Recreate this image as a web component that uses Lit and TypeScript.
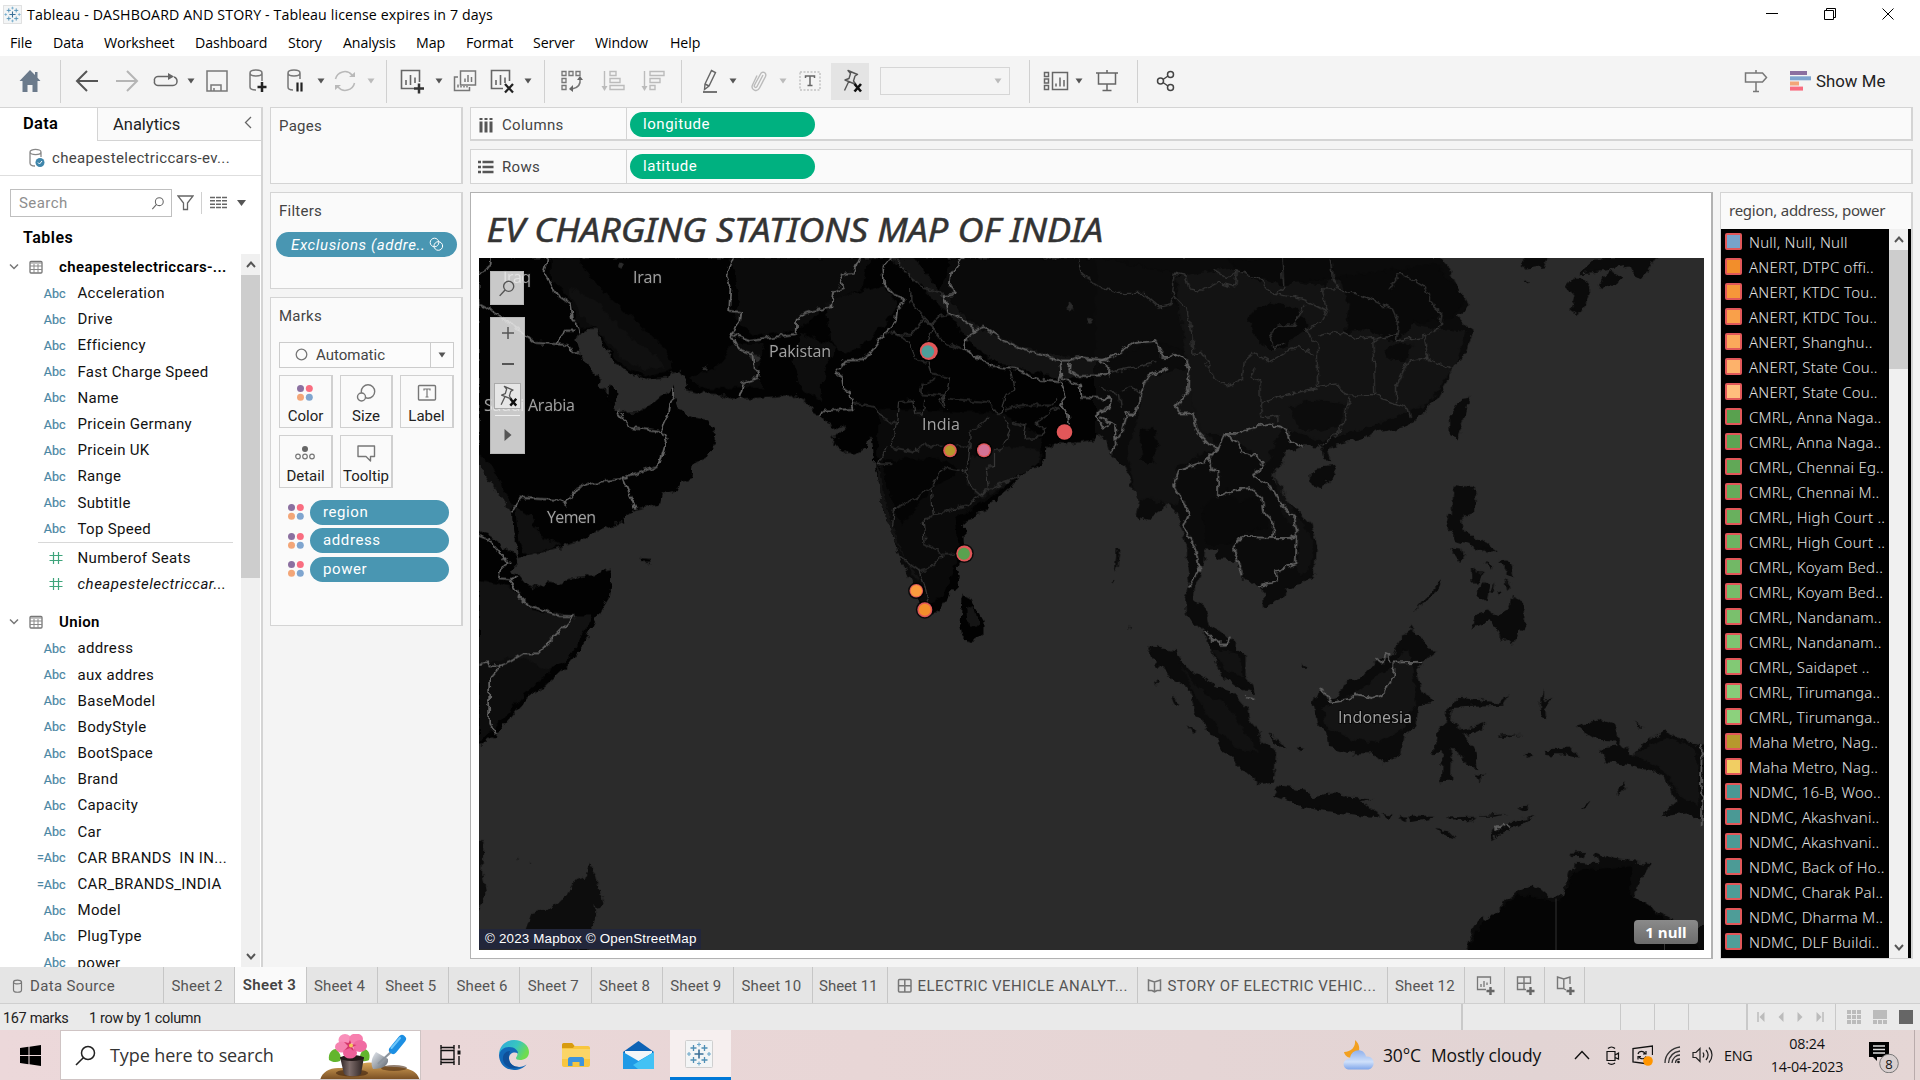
import { LitElement, html, svg, css } from 'lit';
import { customElement, property } from 'lit/decorators.js';

const ic = (w: number, h: number, body: unknown) =>
  html`<svg width=${w} height=${h} viewBox="0 0 ${w} ${h}" fill="none">${body}</svg>`;

const caretIcon = (c: string) => ic(8, 6, svg`<path d="M0.5 0.5h7L4 5.5z" fill=${c} />`);

const snow = (s: number) => html`<svg width=${s} height=${s} viewBox="0 0 28 28" fill="none">
  <rect x=".5" y=".5" width="27" height="27" rx="1" fill="#f3f5f6" stroke="#cfcfcf" />
  <path d="M14 9.5v9M9.5 14h9" stroke="#3a6f97" stroke-width="1.6" />
  <path d="M8.5 5v6M5.500 8h6M19.500 5v6M16.500 8h6M8.500 17v6M5.500 20h6M19.500 17v6M16.500 20h6" stroke="#4f8fb5" stroke-width="1.3" />
  <path d="M14 2.500v4M12 4.500h4M14 21.500v4M12 23.500h4M4 12v4M2 14h4M24 12v4M22 14h4" stroke="#6ba6c9" stroke-width="1.100" />
</svg>`;

const pinX = (s: number) => html`<svg width=${s} height=${s} viewBox="0 0 24 24" fill="none">
  <path d="M8 1.500l9.500 4-2.500 1.500-1.500 5 2.500 3.500-11-4.500 4-1.500 1.500-5zM8.500 13L4.500 21.500" stroke="#555" stroke-width="1.400" stroke-linejoin="round" />
  <path d="M14.500 15l6.500 7.500M21 15l-6.500 7.500" stroke="#111" stroke-width="2.600" />
</svg>`;

const T = {
  home: ic(22, 24, svg`<path d="M11 1L0.500 12h3v11h5v-7h5v7h5V12h3l-3-3.300V3h-2.500v3z" fill="#6b7a8b" />`),
  back: ic(24, 24, svg`<path d="M12 2L2 12l10 10M2 12h21" stroke="#555" stroke-width="2" />`),
  fwd: ic(24, 24, svg`<path d="M12 2l10 10-10 10M22 12H1" stroke="#b5b5b5" stroke-width="2" />`),
  replay: ic(26, 16, svg`<path d="M16 3.500H5a3.500 3.500 0 0 0-3.500 4.500A3.500 3.500 0 0 0 5 12.500h15A4 4 0 0 0 24 8.500 4.500 4.500 0 0 0 21 4" stroke="#666" stroke-width="1.500" /><path d="M15 0l6 3.500-6 3.500z" fill="#666" />`),
  save: ic(22, 22, svg`<path d="M1 1h20v20H1zM5 21v-6h10v6M8 21v-3" stroke="#777" stroke-width="1.500" />`),
  dbPlus: ic(22, 26, svg`<path d="M16 13V5c0-4-12-4-12 0v14c0 2 3 3 6 3M4 5c0 4 12 4 12 0" stroke="#777" stroke-width="1.500" /><path d="M16 14v10M11.500 19h9" stroke="#222" stroke-width="2.500" />`),
  dbPause: ic(20, 26, svg`<path d="M15 11V5c0-4-12-4-12 0v14c0 2 2 3 5 3M3 5c0 4 12 4 12 0" stroke="#777" stroke-width="1.500" /><path d="M12.500 14.500v9M16.500 14.500v9" stroke="#222" stroke-width="2.200" />`),
  refresh: ic(24, 24, svg`<path d="M2.500 10A9.500 9.500 0 0 1 19 6M21.500 14A9.500 9.500 0 0 1 5 18" stroke="#b9b9b9" stroke-width="1.500" /><path d="M22 3v5h-6zM2 21v-5h6z" fill="#b9b9b9" />`),
  newSheet: ic(26, 26, svg`<path d="M15 20.500H2.500v-18h18V14M7 17v-5M11.500 17V7M16 15V9.500" stroke="#666" stroke-width="1.600" /><path d="M20 15.500v10M15 20.500h10" stroke="#333" stroke-width="2.500" />`),
  dup: ic(24, 24, svg`<path d="M7.500 2h15v14h-15zM5 8H1.500v13.500h15V18M12 13V9.500M15 13V6M18.500 13V8M5 18.500v-3M8 18.500V17M11 18.500V17M14 18.500V17" stroke="#777" stroke-width="1.500" />`),
  clear: ic(26, 26, svg`<path d="M14 20.500H2.500v-18h18V13M7 17v-5M11.500 17V7M16 15V9.500" stroke="#666" stroke-width="1.600" /><path d="M16 16l8 8.500M24 16l-8 8.500" stroke="#222" stroke-width="2.300" />`),
  swap: ic(24, 24, svg`<path d="M2 2.500h4v4H2zM9 2.500h4v4H9zM16 2.500h4v4h-4zM2 9.500h4v4H2zM2 16.500h4v4H2z" stroke="#777" stroke-width="1.300" /><path d="M20 10c1 6-3 9-8 10" stroke="#777" stroke-width="1.500" /><path d="M17 11l3-4 3 4zM13 16v7l-4-3z" fill="#666" />`),
  sortA: ic(24, 22, svg`<path d="M3.500 1v18M9 1.500h6v4H9zM9 8.500h10v4H9zM9 15.500h14v4H9z" stroke="#bbb" stroke-width="1.400" /><path d="M.5 16h6l-3 5z" fill="#bbb" />`),
  sortD: ic(24, 22, svg`<path d="M3.500 1v18M9 1.500h14v4H9zM9 8.500h10v4H9zM9 15.500h5v4H9z" stroke="#bbb" stroke-width="1.400" /><path d="M.5 16h6l-3 5z" fill="#bbb" />`),
  pen: ic(24, 24, svg`<path d="M10 15L16.500 1.500l4 2L14 17l-4.500 3.500zM10 15l4 2" stroke="#666" stroke-width="1.400" /><path d="M8 23h14" stroke="#666" stroke-width="1.800" />`),
  clip: ic(20, 24, svg`<path d="M14 6L8 17.500c-1 2-3.500.5-2.500-1.500L11.500 5c1.500-3.500 6.500-1.500 5 2.500L10.500 19c-2.500 5-9 1.500-7-3L8 6.500" stroke="#bbb" stroke-width="1.400" />`),
  text: ic(22, 20, svg`<rect x="1" y="1" width="20" height="18" stroke="#aaa" stroke-dasharray="2 1.500" /><path d="M6.500 7V5h9v2M11 5v9.500M8.500 14.500h5" stroke="#666" stroke-width="1.500" />`),
  cards: ic(26, 20, svg`<path d="M1.500 1.500h4v4h-4zM1.500 8h4v4h-4zM1.500 14.500h4v4h-4zM9.500 1.500h15v17h-15zM13 15.500v-3M17 15.500v-9M21 15.500V9" stroke="#666" stroke-width="1.500" />`),
  present: ic(24, 22, svg`<path d="M1 3h22M3.500 3v11h17V3M12 14v6M7.500 20.500h9M12 0v3" stroke="#666" stroke-width="1.500" />`),
  share: ic(20, 22, svg`<circle cx="4.500" cy="11" r="3" stroke="#444" stroke-width="1.500" /><circle cx="14.500" cy="4.500" r="3" stroke="#444" stroke-width="1.500" /><circle cx="14.500" cy="17.500" r="3" stroke="#444" stroke-width="1.500" /><path d="M7 9.500l5-3.500M7 12.500l5 3.500" stroke="#444" stroke-width="1.500" />`),
  guide: ic(24, 24, svg`<path d="M1.500 4h17l4 4.500-4 4.500h-17zM12 1v3M12 13v9M9 22.500h6" stroke="#777" stroke-width="1.500" />`),
  showMe: ic(22, 20, svg`<path d="M0 2h17" stroke="#8b70a0" stroke-width="4" /><path d="M0 7.300h21" stroke="#7fa5cf" stroke-width="4" /><path d="M0 12.500h9" stroke="#f3a678" stroke-width="4" /><path d="M0 17.600h13" stroke="#f96d80" stroke-width="4" />`),
};

const db = (c = '#777') => ic(12, 14, svg`<path d="M1.500 3v8c0 3 8 3 8 0V3c0-2.500-8-2.500-8 0c0 2.500 8 2.500 8 0" stroke=${c} stroke-width="1.200" />`);
const gridIc = ic(16, 16, svg`<rect x="1.500" y="1.500" width="12.500" height="12.500" rx="1" stroke="#777" stroke-width="1.500" /><path d="M7.800 1.500v12.500M1.500 7.800h12.500" stroke="#777" stroke-width="1.500" />`);
const bookIc = ic(16, 16, svg`<path d="M1.500 2l6 2 6-2v10.500h-3.500l-2.500 1.500-2.500-1.500H1.500zM7.500 4v10" stroke="#777" stroke-width="1.500" />`);

const dots = ic(18, 18, svg`<circle cx="4.500" cy="4.500" r="3.500" fill="#8b70a0" /><circle cx="13.300" cy="4.500" r="3.500" fill="#f96d80" /><circle cx="4.500" cy="13.300" r="3.500" fill="#f3a678" /><circle cx="13.300" cy="13.300" r="3.500" fill="#7fa5cf" />`);

const lens = (s: number, c: string) => html`<svg width=${s} height=${s} viewBox="0 0 16 16" fill="none"><circle cx="9.500" cy="6.500" r="4.500" stroke=${c} stroke-width="1.200" /><path d="M6.300 9.700L1.500 15" stroke=${c} stroke-width="1.300" /></svg>`;

/* ---- map geometry: three sheets of coordinates, each with its own scale ---- */
const WEST_LAND = [
  '22,20 1580,20 1580,575 1568,585 1566,560 1555,540 1540,530 1530,550 1500,555 1480,562 1440,560 1412,570 1410,600 1395,625 1370,635 1345,660 1320,695 1275,735 1270,752 1240,760 1232,780 1215,785 1208,800 1210,850 1205,890 1195,920 1200,950 1195,978 1180,990 1172,1018 1155,1025 1145,1048 1120,1062 1108,1050 1100,1020 1085,960 1055,895 1045,840 1030,800 1015,760 1000,680 988,630 990,610 985,545 975,545 972,575 945,592 925,594 900,570 880,540 905,535 925,508 900,518 870,500 868,485 838,465 830,445 812,435 805,418 700,428 640,430 610,418 555,412 530,405 525,370 510,350 490,355 485,370 440,375 400,360 350,325 345,305 320,265 310,230 285,230 258,255 265,290 285,330 320,375 318,395 335,410 340,440 365,472 420,465 455,440 470,425 490,410 497,390 500,430 510,460 545,485 580,492 605,530 600,555 575,605 548,620 545,660 515,670 505,700 470,708 465,735 405,750 380,770 378,790 290,825 270,845 190,870 120,893 115,850 105,830 100,760 75,710 45,650 22,600',
  '10,810 22,815 50,830 75,850 115,890 118,905 100,930 118,945 135,970 160,978 190,965 220,970 240,955 310,945 325,930 348,925 345,965 340,1010 310,1070 285,1130 245,1200 190,1260 140,1300 70,1400 45,1420 40,1430 10,1440',
  '1207,1000 1230,1015 1258,1075 1258,1110 1245,1128 1220,1135 1205,1115 1200,1070 1203,1020',
  '415,894 440,896 443,904 418,904',
  '345,392 357,396 359,430 350,455 338,440 338,412',
];
const WEST_TONES: [string, string][] = [
  ['#0b0b0b', '200,22 260,22 330,120 420,220 480,290 500,345 440,365 380,340 340,290 310,225 270,225 240,130 200,90'],
  ['#101010', '240,110 290,130 380,240 450,300 480,340 430,350 370,310 320,240 270,190'],
  ['#0b0b0b', '640,22 980,22 960,110 880,160 800,230 700,250 650,200 660,130'],
  ['#0b0b0b', '650,270 720,270 700,360 720,400 660,400 560,400 540,370 600,340'],
  ['#0d0d0d', '810,240 900,280 870,340 860,440 810,400 790,320'],
  ['#0e0e0e', '870,150 1010,100 1050,160 990,250 920,300 880,260'],
  ['#131313', '1030,22 1090,22 1150,120 1240,215 1350,280 1460,310 1568,320 1568,370 1450,370 1300,330 1220,260 1170,180 1110,110'],
  ['#0a0a0a', '1180,22 1568,22 1568,320 1460,310 1350,280 1240,215 1150,120'],
  ['#0a0a0a', '1000,460 1300,470 1400,540 1400,610 1270,720 1190,780 1200,880 1160,1000 1110,1040 1050,880 1010,720 1000,600'],
  ['#040404', '1010,610 1150,600 1200,640 1120,700 1060,800 1040,760'],
  ['#121212', '1225,600 1310,570 1400,580 1390,620 1300,690 1250,720 1215,670'],
  ['#131313', '990,620 1005,640 1020,740 1060,880 1100,960 1085,950 1045,850 1010,740'],
  ['#101010', '110,740 150,770 170,830 230,850 140,885 118,840'],
  ['#0e0e0e', '22,590 50,620 105,740 100,760 60,690 22,620'],
  ['#121212', '22,960 110,980 150,1040 240,1060 300,1060 240,1190 160,1240 60,1250 22,1200'],
  ['#0d0d0d', '22,1200 120,1180 200,1220 130,1290 60,1390 22,1430'],
  ['#151515', '1215,1040 1235,1030 1245,1090 1220,1090'],
];
const WATER_SPOTS = ['1458,160 1470,150 1478,160 1482,168 1468,172', '1508,200 1530,198 1522,212 1512,214', '570,335 582,332 582,346 572,346', '690,300 712,308 700,320 688,310', '362,46 370,38 378,48 370,56'];
const WEST_BORDERS = [
  '190,20 180,60 200,100 215,130 245,155 250,200 268,225 270,238',
  '18,153 60,180 120,230 158,268 212,272 240,275 248,295 268,295',
  '212,270 222,250 232,233 255,233',
  '52,20 50,50 20,67',
  '645,18 628,70 638,110 635,175 665,180 662,205 638,240 652,270 665,290 692,300 695,345 708,350 705,370 670,385 660,430',
  '638,240 685,260 800,242 802,200 815,185 840,175 885,165 890,120 915,105 905,70 938,65 955,18',
  '1030,18 1010,50 1012,95 1040,130 1068,145 1045,170 1040,210 1015,240 980,300 960,318 920,320 895,355 912,370 915,400 930,410 940,460 870,465 855,480',
  '1212,18 1178,70 1175,105 1192,125 1160,130 1170,180 1205,200 1240,230 1260,222 1310,262 1360,290 1400,300 1445,320 1470,320 1490,310 1568,320',
  '1240,230 1215,255 1210,285 1280,335 1340,345 1395,375 1440,382 1450,370 1445,318',
  '1470,325 1468,350 1490,365 1568,362',
  '1450,375 1495,390 1498,425 1568,430',
  '1448,382 1460,420 1445,450 1465,475 1468,510',
  '1568,450 1540,470 1538,490 1552,515 1568,500',
  '500,395 500,430 488,445 485,475 468,520 482,550 463,625 375,662 288,678 258,695 235,738 222,725 120,718 112,740 102,760',
  '360,465 392,512 468,525',
  '375,662 407,750',
  '18,828 45,840 75,880 95,905 75,925 70,955 105,958',
  '112,940 100,965 120,1005 140,1028 222,1062 254,1062 167,1170 130,1170 100,1192 75,1205 45,1205 40,1193 18,1205',
  '75,1205 47,1245 47,1375 66,1403',
];
const WEST_STATES = [
  '1040,20 1080,80 1110,110 1150,120 1165,130', '1080,110 1080,150 1110,190 1130,215 1150,190 1175,185', '1015,240 1080,245 1110,200 1135,225 1122,262', '1040,240 1072,260 1090,315 1125,325 1132,360 1175,370 1170,400 1150,440 1165,458 1155,420 1105,415 1105,395 1140,370',
  '1130,225 1165,270 1210,290', '940,445 995,455 1015,490 1045,505 1050,440 1085,435 1090,475 1110,475 1115,430', '1170,430 1270,440 1290,475 1300,475 1310,425 1335,400 1325,350', '1310,460 1350,450 1430,450 1440,425', '1045,505 1030,570 1090,585 1110,565 1170,570 1225,568 1225,530 1260,500 1270,475',
  '1225,568 1220,620 1210,640 1230,690 1250,710 1270,690 1265,630 1285,625 1285,580 1300,580 1325,520 1305,480', '1330,500 1360,510 1355,545 1400,540 1410,520 1385,500 1440,455', '1035,620 1000,620 1020,570', '1205,640 1160,630 1135,680 1090,720 1040,750 1035,800', '1130,690 1135,770 1215,740 1250,710 1300,680 1345,655', '1135,775 1110,780 1115,850 1160,880 1205,880', '1160,885 1130,920 1100,930 1055,890', '1100,930 1115,980 1125,1030', '1490,20 1500,70 1540,105 1568,115',
];
const EAST_LAND = [
  '-12,12 855,12 885,40 905,85 930,110 935,125 905,145 925,165 945,180 930,205 925,225 900,250 885,265 880,285 850,330 800,368 770,390 700,402 660,418 585,433 575,445 583,465 568,463 562,440 555,430 510,430 470,445 465,465 440,485 438,510 470,550 510,580 535,605 548,650 545,710 510,738 470,745 460,765 415,790 412,750 380,735 360,720 350,685 320,680 295,680 293,660 265,660 262,690 240,740 238,770 265,790 275,830 305,845 330,860 368,895 368,940 385,960 393,982 350,965 305,935 285,890 270,850 245,825 215,805 213,770 225,730 220,690 220,650 200,600 190,575 165,555 160,570 120,595 90,585 100,550 75,510 65,480 25,450 15,420 -12,400',
  '935,325 930,350 910,395 900,415 885,405 882,370 905,335 915,328',
  '530,495 545,480 598,475 590,495 560,525 532,518',
  '1180,80 1200,60 1225,60 1240,85 1225,120 1210,143 1190,130 1200,100',
  '1258,80 1290,45 1325,60 1300,75 1268,90', '1210,50 1250,18 1410,12 1370,66 1345,52 1340,35 1250,48', '1070,12 1135,12 1120,35 1070,40', '1070,70 1085,68 1080,75',
  '895,518 945,522 950,555 945,580 915,590 920,620 965,640 1000,662 990,668 930,648 900,640 875,600 878,582 890,590 890,540',
  '888,658 915,660 922,680 912,690', '1010,685 1040,688 1046,722 1030,715', '938,705 970,712 955,735 940,735', '950,760 970,730 985,735 975,775', '985,760 1000,732 995,760', '1005,755 1018,752 1010,762', '1025,720 1038,740 1030,750', '970,690 988,695 985,705', '950,655 985,662 975,668',
  '940,835 950,805 985,795 1005,805 1035,790 1045,765 1068,775 1077,830 1062,840 1045,870 1015,858 1000,830 985,815',
  '795,795 865,728 862,745 815,782', '780,835 790,825 792,838',
  '785,840 810,850 830,878 852,882 820,905 800,930 810,965 842,998 805,1005 800,1050 770,1065 765,1110 715,1132 690,1110 640,1110 580,1098 575,1065 550,1045 540,1000 555,975 580,990 600,985 615,955 665,940 700,905 740,895 760,855',
  '120,872 190,885 225,925 300,965 335,975 370,1010 375,1035 400,1060 410,1085 445,1105 440,1175 405,1178 345,1135 290,1080 245,1025 225,970 175,940 130,900',
  '180,985 195,990 200,1005 188,1002', '222,1050 238,1060 235,1070', '137,948 150,955 142,958', '425,1068 455,1080 468,1100 445,1092', '498,1095 516,1098 505,1106', '510,912 520,915 515,922',
  '450,1183 515,1190 540,1205 590,1198 625,1208 690,1212 660,1218 700,1240 708,1252 640,1245 550,1235 500,1225 435,1203',
  '712,1243 740,1248 730,1255', '755,1252 775,1252 765,1262', '780,1248 845,1248 830,1258 785,1265', '875,1252 950,1250 930,1260 885,1258', '950,1250 1030,1244 1000,1250', '1055,1232 1085,1230 1070,1238', '848,1278 880,1280 900,1298 870,1290', '985,1300 1000,1275 1040,1262 1098,1250 1060,1268 1020,1288',
  '875,1040 880,1005 910,988 1010,998 1035,980 1020,1005 930,1008 890,1010 885,1040 915,1060 980,1042 960,1058 920,1072 950,1110 955,1145 925,1140 908,1100 890,1095 888,1170 862,1172 865,1110 843,1112 855,1055',
  '950,1155 972,1160 960,1172', '1110,1000 1120,965 1120,995 1142,985 1125,1010 1130,1040 1112,1025', '1010,1070 1065,1072 1012,1076', '1065,1110 1097,1112 1085,1122', '1120,1103 1190,1102 1208,1120 1170,1112 1130,1112', '1310,1190 1328,1170 1326,1192 1314,1205', '1215,1232 1240,1216 1228,1232',
  '1205,1050 1260,1035 1300,1045 1310,1080 1345,1115 1380,1085 1425,1062 1480,1085 1540,1092 1540,1272 1490,1240 1422,1247 1455,1220 1440,1175 1400,1150 1330,1135 1280,1130 1262,1100 1310,1095 1300,1082 1255,1080 1220,1060', '1350,1042 1378,1055 1362,1052',
  '925,1560 945,1490 965,1470 985,1490 1020,1440 1060,1410 1095,1398 1135,1428 1170,1425 1185,1370 1210,1352 1260,1355 1250,1330 1300,1345 1365,1352 1395,1355 1370,1390 1350,1425 1400,1455 1450,1478 1500,1505 1540,1480 1540,1560',
  '1190,1332 1230,1330 1222,1340 1195,1342', '42,660 49,662 44,700 38,710', '32,730 36,732 34,738', '72,830 76,832 74,838',
];
const EAST_TONES: [string, string][] = [
  ['#0c0c0c', '-10,14 180,50 190,110 230,180 220,230 150,200 60,230 -10,260'],
  ['#131313', '190,60 330,40 560,80 590,60 760,160 840,170 925,180 900,250 830,340 700,385 560,420 460,390 420,470 320,410 240,400 220,260'],
  ['#121212', '110,280 220,260 240,380 300,430 190,480 200,560 90,545 70,440 100,360'],
  ['#080808', '375,150 400,125 430,112 500,130 530,165 500,185 460,215 420,215 395,195'],
  ['#090909', '600,60 760,40 850,30 925,110 890,150 800,160 760,190 740,200 680,175 620,180 630,120'],
  ['#090909', '320,20 580,16 590,60 460,75 380,60'],
  ['#070707', '100,400 130,385 145,430 135,470 105,465'],
  ['#090909', '255,570 290,545 320,530 350,555 400,545 420,575 425,610 370,625 320,650 270,650'],
  ['#0c0c0c', '480,345 540,330 620,340 600,390 540,400 500,390'], ['#0a0a0a', '720,220 750,205 790,210 770,245 730,240'],
  ['#101010', '440,500 500,590 540,640 535,700 500,720 500,630 450,560'], ['#121212', '280,880 350,890 360,940 320,930'],
  ['#141414', '560,1010 620,990 700,940 780,880 800,1000 760,1060 700,1090 640,1080 570,1050'], ['#111111', '200,910 240,960 330,1010 400,1110 340,1100 250,1000'],
  ['#131313', '1340,1115 1430,1075 1510,1100 1515,1230 1460,1200 1430,1150'], ['#050505', '930,1548 960,1490 1060,1420 1160,1440 1200,1370 1340,1360 1340,1420 1480,1510 1540,1560 930,1560'],
];
const EAST_BORDERS = [
  '0,245 40,230 85,205 140,200 150,215 160,235 175,235 190,228 215,240 225,265 222,310 192,345 200,360 235,360 245,400 275,428 300,435 315,405 345,405 370,395 430,382 470,395 480,420 510,432',
  '0,275 20,272 22,258 0,245', '175,260 125,275 105,310 90,360 65,360 55,400 40,420 38,385 0,370', '25,445 40,430 38,400', '0,325 28,328 20,352 0,355',
  '300,435 265,465 200,485 185,520 225,580 210,610 240,655 252,705 227,742', '300,435 275,455 285,485 300,488 298,545 340,528 380,525 410,548 415,580 438,600 435,635 360,632 338,655 350,690 358,715',
  '315,405 345,420 355,445 400,455 415,475 385,495 430,520 460,560 492,590 498,625 495,690 445,708 450,730 400,742', '435,635 475,635 495,628',
  '268,842 280,855 300,868 322,868 330,853', '556,968 590,998 630,992 645,980 685,988 715,980 742,940 742,910 815,908', '697,900 715,912 722,892 730,895 732,910', '1522,1092 1520,1190 1524,1200 1522,1270', '1000,1278 1015,1272 1035,1268', '372,985 390,990',
];
const EAST_STATES = [
  '0,82 50,95 110,95 150,125 180,120 190,50 215,55 225,85 260,88 300,70 340,80 345,45 400,60 430,92 520,110 575,135 560,160 520,175 550,210 550,300 600,295 620,320 690,318 750,340 780,350 785,370', '285,40 320,60 345,45', '460,14 465,80 440,95', '585,14 590,60 605,85 680,105 740,130 755,160 750,200 820,190 860,170 865,140', '730,90 760,50 820,80 845,125 865,140', '185,100 220,130 232,180 235,230 260,225 290,285 325,298 360,285 365,245 390,225 430,245 500,210 540,230', '430,180 450,165 490,165 520,120', '430,180 440,215 470,205', '550,190 600,178 650,195 690,190 695,318', '690,200 750,185', '820,190 830,240 885,262', '830,235 780,245 750,300 750,340', '390,260 380,280 405,290 405,340 460,320 550,305', '405,340 410,370 450,365 450,380', '632,325 620,380 580,420 560,430', '560,85 575,135', '560,85 600,85', '20,270 100,255 140,245', '50,310 80,300 100,315', '55,350 50,320 0,300',
];
const SOUTH_LAND = ['290,665 310,700 320,760 327,790 320,805 305,790 308,830 298,865 288,935 145,935 137,865 150,820 180,812 205,800 225,775 240,770 255,720 280,710', '10,598 33,603 30,700 40,760 22,805 10,810', '116,646 119,648 118,655', '149,666 152,668 150,670'];

const poly = (pts: string, fill: string) => svg`<polygon points=${pts} fill=${fill} />`;
const line = (pts: string, cls: string) => svg`<polyline points=${pts} class=${cls} />`;

@customElement('dark-map')
class DarkMap extends LitElement {
  static styles = css`
    :host { display: block; position: relative; width: 1225px; height: 692px; overflow: hidden; background: #2b2b2b; }
    svg { display: block; }
    .map { position: absolute; left: 0; top: 0; }
    .b { fill: none; stroke: #626262; stroke-width: 1.8; vector-effect: non-scaling-stroke; stroke-linejoin: round; }
    .s { fill: none; stroke: #373737; stroke-width: 1.25; vector-effect: non-scaling-stroke; }
    text { font-family: "Open Sans", "Noto Sans", sans-serif; font-size: 16px; fill: #a2a2a2; stroke: #0a0a0a; stroke-width: 2px; paint-order: stroke; }
    .find, .nav { position: absolute; left: 11px; background: rgba(240, 240, 240, .84); box-shadow: inset 0 0 0 1px rgba(180,180,180,.8); display: flex; align-items: center; }
    .find { top: 13px; width: 34px; height: 34px; justify-content: center; }
    .nav { top: 59px; width: 35px; height: 137px; flex-direction: column; }
    .nav > div { display: flex; align-items: center; justify-content: center; width: 35px; height: 32px; }
    .nav .pin { box-sizing: border-box; width: 27px; height: 27px; margin-top: 3px; border: 1px solid #aaa; background: #e6e6e6; }
    .nav .rule { width: 25px; height: 1px; background: #eee; margin-top: 6px; }
    .nav .play { height: 39px; }
    .attr { position: absolute; left: 0; bottom: 1px; width: 216px; padding-left: 6px; background: #22263a; color: #fff; font: 13.4px/19px "Liberation Sans", Arial, sans-serif; letter-spacing: .17px; height: 20px; }
    .null { position: absolute; right: 6px; bottom: 6px; width: 64px; height: 24px; border-radius: 4px; background: linear-gradient(#8a8a8a, #6c6c6c); color: #fff; font: 700 15px/24px "Open Sans", sans-serif; text-align: center; }
  `;
  render() {
    const marks: [number, number, number, string, number, number][] = [
      [928.800, 350.500, 9, '#4e9e99', 6.300, -1], [950, 450, 6.800, '#b6992d', 5.200, 0], [984, 449.700, 7, '#d37295', 5.700, 0], [1064.500, 431.500, 7.800, '#e15759', 7, 0], [964.300, 553, 8, '#59a14f', 6, -.4], [916.300, 590.300, 6.800, '#fb9b3e', 5.800, 0], [924.800, 609.200, 7.500, '#f28e2b', 6, 0],
    ];
    return html`
      <svg class="map" width="1225" height="692" viewBox="479 257.5 1225 692">
        <defs>
          <filter id="rough" filterUnits="userSpaceOnUse" x="460" y="240" width="1270" height="730" color-interpolation-filters="sRGB">
            <feTurbulence type="fractalNoise" baseFrequency="0.11" numOctaves="3" seed="4" result="n" />
            <feDisplacementMap in="SourceGraphic" in2="n" scale="9" xChannelSelector="R" yChannelSelector="G" />
          </filter>
          <filter id="thin" filterUnits="userSpaceOnUse" x="460" y="240" width="1270" height="730" color-interpolation-filters="sRGB">
            <feTurbulence type="fractalNoise" baseFrequency="0.14" numOctaves="2" seed="9" result="n" />
            <feDisplacementMap in="SourceGraphic" in2="n" scale="7" xChannelSelector="R" yChannelSelector="G" />
          </filter>
        </defs>
        <g filter="url(#rough)">
          <g transform="translate(470 250) scale(.40816 .34436)">${WEST_LAND.map((p) => poly(p, '#020202'))}${WEST_TONES.map(([c, p]) => poly(p, c))}${WATER_SPOTS.map((p) => poly(p, '#2b2b2b'))}</g>
          <g transform="translate(1100 250) scale(.39541 .4529)">${EAST_LAND.map((p) => poly(p, '#0b0b0b'))}${EAST_TONES.map(([c, p]) => poly(p, c))}</g>
          <g transform="translate(470 640) scale(.40816 .33333)">${SOUTH_LAND.map((p) => poly(p, '#0d0d0d'))}</g>
        </g>
        <g filter="url(#thin)">
          <g transform="translate(470 250) scale(.40816 .34436)">${WEST_STATES.map((p) => line(p, 's'))}${WEST_BORDERS.map((p) => line(p, 'b'))}</g>
          <g transform="translate(1100 250) scale(.39541 .4529)">${EAST_STATES.map((p) => line(p, 's'))}${EAST_BORDERS.map((p) => line(p, 'b'))}</g>
        </g>
        <path d="M1556 898V949.500M1664.500 935V949.500" stroke="#333" />
        <text x="503" y="282.500" textLength="28">Iraq</text>
        <text x="633" y="282.500" textLength="29">Iran</text>
        <text x="769" y="356.500" textLength="62">Pakistan</text>
        <text x="484" y="410.500" textLength="91">Saudi Arabia</text>
        <text x="922" y="429.500" textLength="38">India</text>
        <text x="547" y="522" textLength="49">Yemen</text>
        <text x="1338" y="722.500" textLength="74">Indonesia</text>
        ${marks.map(([x, y, r, c, ri, dx]) => svg`<circle cx=${x} cy=${y} r=${r + 1.500} fill="#000" opacity=".75" /><circle cx=${x} cy=${y} r=${r} fill="#e15759" /><circle cx=${x + dx} cy=${y - dx * 0.500} r=${ri} fill=${c} />`)}
      </svg>
      <div class="find">${lens(18, '#555')}</div>
      <div class="nav">
        <div>${ic(14, 14, svg`<path d="M7 1v12M1 7h12" stroke="#555" stroke-width="1.500" />`)}</div>
        <div>${ic(14, 14, svg`<path d="M1 7h12" stroke="#555" stroke-width="2" />`)}</div>
        <div class="pin">${pinX(22)}</div>
        <i class="rule"></i>
        <div class="play">${ic(8, 12, svg`<path d="M0.500 0L7.500 6L0.500 12z" fill="#555" />`)}</div>
      </div>
      <div class="attr">© 2023 Mapbox © OpenStreetMap</div>
      <div class="null">1 null</div>`;
  }
}

@customElement('scroll-rail')
class ScrollRail extends LitElement {
  @property({ type: Number }) thumb = 100;
  static styles = css`
    :host { display: flex; flex-direction: column; width: 19px; background: #f0f0f0; align-items: center; }
    .a { height: 21px; display: flex; align-items: center; flex: none; }
    .t { width: 100%; background: #cdcdcd; flex: none; }
    .g { flex: 1; }
  `;
  render() {
    return html`<div class="a">${ic(10, 7, svg`<path d="M1 6l4-4.500L9 6" stroke="#555" stroke-width="1.900" />`)}</div>
      <div class="t" style="height:${this.thumb}px"></div><div class="g"></div>
      <div class="a">${ic(10, 7, svg`<path d="M1 1l4 4.500L9 1" stroke="#555" stroke-width="1.900" />`)}</div>`;
  }
}

type Field = [string, string];
const FIELDS1: Field[] = ['Acceleration', 'Drive', 'Efficiency', 'Fast Charge Speed', 'Name', 'Pricein Germany', 'Pricein UK', 'Range', 'Subtitle', 'Top Speed'].map((n) => ['Abc', n] as Field);
const FIELDS2: Field[] = [['Abc', 'address'], ['Abc', 'aux addres'], ['Abc', 'BaseModel'], ['Abc', 'BodyStyle'], ['Abc', 'BootSpace'], ['Abc', 'Brand'], ['Abc', 'Capacity'], ['Abc', 'Car'], ['=Abc', 'CAR BRANDS\u00a0 IN IN...'], ['=Abc', 'CAR_BRANDS_INDIA'], ['Abc', 'Model'], ['Abc', 'PlugType'], ['Abc', 'power']];
const LEGEND: [string, string][] = [
  ['#76a3cb', 'Null, Null, Null'], ['#f28e2b', 'ANERT, DTPC offi..'], ['#f69739', 'ANERT, KTDC Tou..'], ['#f9a04a', 'ANERT, KTDC Tou..'], ['#fba95b', 'ANERT, Shanghu..'], ['#fdb26b', 'ANERT, State Cou..'], ['#ffbe7d', 'ANERT, State Cou..'],
  ['#59a14f', 'CMRL, Anna Naga..'], ['#5da453', 'CMRL, Anna Naga..'], ['#61a857', 'CMRL, Chennai Eg..'], ['#65ac5a', 'CMRL, Chennai M..'], ['#69b05e', 'CMRL, High Court ..'], ['#6db462', 'CMRL, High Court ..'], ['#72b866', 'CMRL, Koyam Bed..'], ['#76bc69', 'CMRL, Koyam Bed..'], ['#7ac06d', 'CMRL, Nandanam..'], ['#7ec471', 'CMRL, Nandanam..'], ['#82c975', 'CMRL, Saidapet ..'], ['#87cd79', 'CMRL, Tirumanga..'], ['#8cd17d', 'CMRL, Tirumanga..'],
  ['#b6992d', 'Maha Metro, Nag..'], ['#f1ce63', 'Maha Metro, Nag..'], ['#499894', 'NDMC, 16-B, Woo..'], ['#4a9995', 'NDMC, Akashvani..'], ['#4b9a95', 'NDMC, Akashvani..'], ['#4c9b96', 'NDMC, Back of Ho..'], ['#4d9c97', 'NDMC, Charak Pal..'], ['#4e9d98', 'NDMC, Dharma M..'], ['#509e99', 'NDMC, DLF Buildi..'],
];

@customElement('app-root')
class AppRoot extends LitElement {
  static styles = css`
    :host { display: flex; flex-direction: column; width: 1920px; height: 1080px; overflow: hidden; background: #f4f4f4; font-family: Roboto, "Liberation Sans", sans-serif; font-size: 15px; color: #222; white-space: nowrap; }
    * { box-sizing: border-box; }
    svg { display: block; flex: none; }
    .title { height: 28px; background: #fff; display: flex; align-items: center; padding-left: 3px; gap: 5px; font-family: "Open Sans", sans-serif; font-size: 14.2px; color: #000; letter-spacing: .12px; }
    .title .win { margin-left: auto; display: flex; gap: 46px; padding-right: 26px; }
    .menu { height: 28px; background: #fff; display: flex; align-items: center; padding-left: 10px; font-family: "Open Sans", sans-serif; font-size: 14.2px; color: #000; letter-spacing: -.1px; }
    .menu span:nth-child(1) { width: 43px; } .menu span:nth-child(2) { width: 51px; } .menu span:nth-child(3) { width: 91px; } .menu span:nth-child(4) { width: 93px; } .menu span:nth-child(5) { width: 55px; } .menu span:nth-child(6) { width: 73px; } .menu span:nth-child(7) { width: 50px; } .menu span:nth-child(8) { width: 67px; } .menu span:nth-child(9) { width: 62px; } .menu span:nth-child(10) { width: 75px; }
    .tools { height: 51px; padding: 0 0 1px 7px; display: grid; align-items: center; justify-items: center; grid-template-columns: 46px 14px 40px 40px 37px 14px 38px 42px 34px 18px 30px 22px 9px 42px 12px 40px 34px 18px 15px 40px 42px 38px 18px 34px 18px 34px 14px 40px 40px 150px 18px 36px 10px 46px 14px 44px 1fr 40px 144px; }
    .sep { width: 1px; height: 43px; background: #d0d0d0; }
    .on { width: 38px; height: 37px; background: #e4e4e4; display: flex; align-items: center; justify-content: center; padding-left: 3px; }
    .fit { width: 130px; height: 28px; border: 1px solid #d6d6d6; display: flex; align-items: center; justify-content: flex-end; padding-right: 7px; }
    .showme { width: 100%; padding-left: 14px; display: flex; align-items: center; gap: 4px; font-size: 16.8px; letter-spacing: .03px; }
    .main { height: 860px; display: flex; }
    .side { width: 263px; height: 860px; border-right: 2px solid #d4d4d4; border-top: 1px solid #d4d4d4; background: #fff; display: flex; flex-direction: column; }
    .tabs { display: flex; height: 33px; flex: none; font-size: 16.5px; line-height: 31px; }
    .tabs b { width: 97px; padding-left: 23px; font-weight: 600; color: #000; font-size: 16.5px; letter-spacing: .3px; }
    .tabs div { flex: 1; display: flex; justify-content: space-between; align-items: center; border-left: 1px solid #d4d4d4; border-bottom: 1px solid #d4d4d4; background: #fafafa; padding: 0 9px 0 15px; }
    .tabs div svg { margin-top: -3px; }
    .src { height: 35px; flex: none; border-bottom: 1px solid #dedede; display: flex; align-items: center; gap: 7px; padding-left: 28px; color: #444; letter-spacing: .33px; }
    .srch { height: 52px; flex: none; display: flex; align-items: center; padding: 1px 14px 0 10px; }
    .box { width: 162px; height: 28px; border: 1px solid #bfbfbf; display: flex; align-items: center; justify-content: space-between; padding: 0 6px 0 8px; color: #8e8e8e; margin-right: 5px; letter-spacing: .45px; }
    .srch i { width: 1px; height: 22px; background: #d0d0d0; margin: 0 8px 0 7px; }
    .srch svg:last-child { margin-left: 10px; }
    .tbl { height: 26px; flex: none; padding: 0 0 0 23px; font-weight: 600; color: #000; line-height: 20px; font-size: 16px; letter-spacing: .5px; }
    .tree { flex: 1; display: flex; min-height: 0; }
    .list { width: 241px; overflow: hidden; color: #111; letter-spacing: .33px; }
    .row { display: grid; grid-template-columns: 66px 1fr; align-items: center; height: 26.2px; padding-left: 11.500px; }
    .row .k { justify-self: end; font-size: 12.5px; color: #4a86a3; letter-spacing: 0; -webkit-text-stroke: .2px #4a86a3; margin-right: 12px; }
    .row em { letter-spacing: .5px; }
    .head { display: grid; grid-template-columns: 20px 30px 1fr; height: 26px; align-items: center; padding-left: 9px; font-weight: 600; color: #000; letter-spacing: .37px; }
    .head.second { margin-top: 11px; height: 27px; }
    .rule { height: 1px; background: #d8d8d8; margin: 0 8px 2px 38px; }
    .hash { justify-self: end; margin-right: 15px; }
    .cards { width: 200px; padding-left: 7px; display: flex; flex-direction: column; gap: 8px; }
    .card { border: 1px solid #d4d4d4; border-right-width: 2px; background: #fafafa; color: #444; padding: 8px 5px; line-height: 21px; letter-spacing: .25px; }
    .pages { height: 77px; } .filters { height: 97px; } .marks { height: 329px; }
    .card h4 { margin: 0 0 0 3px; font-weight: 400; font-size: 15px; }
    .pill { background: #4996b2; color: #fff; border-radius: 13px; height: 25px; line-height: 24px; padding-left: 13px; letter-spacing: .6px; }
    .fpill { margin-top: 10px; margin-left: 0; width: 181px; font-style: italic; display: flex; align-items: center; gap: 3px; font-size: 15px; padding-left: 15px; letter-spacing: .63px; }
    .auto { margin: 15px 0 0 3px; width: 175px; height: 26px; border: 1px solid #ccc; display: flex; align-items: center; background: #fcfcfc; letter-spacing: 0; }
    .auto svg:first-child { margin: -1px 8px 0 15px; }
    .auto span { width: 115px; height: 24px; line-height: 24px; border-right: 1px solid #ccc; }
    .auto svg:last-child { margin-left: 7px; }
    .btns { display: grid; grid-template-columns: 54px 53px 54px; column-gap: 7px; row-gap: 7px; margin: 7px 0 0 3px; }
    .btn { height: 53px; border: 1px solid #d0d0d0; border-right-width: 2px; display: flex; flex-direction: column; align-items: center; justify-content: space-between; padding: 8px 0 0; color: #222; letter-spacing: 0; }
    .btn:nth-child(1) svg, .btn:nth-child(4) svg { margin-right: 2px; }
    .mk { display: flex; align-items: center; gap: 5px; margin: 0 0 3.500px 11px; }
    .mk .pill { width: 139px; }
    .mks { margin-top: 11.500px; }
    .right { width: 1457px; padding-left: 7px; display: flex; flex-direction: column; gap: 8px; }
    .shelf { width: 1443px; height: 35px; border: 1px solid #d4d4d4; border-right-width: 2px; border-bottom-width: 1px; background: #fafafa; display: flex; align-items: center; color: #444; letter-spacing: .3px; }
    .shelf.c { height: 34px; border-bottom-width: 2px; }
    .shelf.c .lab { padding-top: 2px; }
    .shelf.c .green { margin-top: 1px; }
    .shelf .lab { width: 156px; height: 100%; border-right: 1px solid #d4d4d4; display: flex; align-items: center; gap: 8px; padding-left: 7px; }
    .green { background: #00b180; color: #fff; width: 185px; height: 25px; border-radius: 13px; margin-left: 3px; padding-left: 13px; line-height: 24px; letter-spacing: .55px; }
    .work { display: flex; gap: 7px; }
    .sheet { width: 1243px; height: 767px; border: 1px solid #b2b2b2; border-right-width: 2px; background: #fff; padding: 0 0 0 8px; }
    .sheet h1 { margin: 0; height: 65px; width: 1000px; padding-left: 7px; font: italic 400 33.5px/72px "Noto Sans", sans-serif; color: #333; letter-spacing: -.1px; -webkit-text-stroke: .5px #333; transform: scaleX(1.08); transform-origin: 0 0; }
    .legend { width: 193px; height: 767px; border: 1px solid #d4d4d4; border-right-width: 2px; background: #fafafa; display: flex; flex-direction: column; }
    .lh { height: 36px; padding-left: 8px; font: 15px/34px "Noto Sans", sans-serif; color: #444; letter-spacing: -.25px; }
    .lb { flex: 1; background: #000; display: flex; justify-content: space-between; min-height: 0; padding-right: 3px; }
    .it { height: 25.040px; display: flex; align-items: center; gap: 7px; padding-left: 4px; color: #e2e2e2; font: 300 15px "Noto Sans", sans-serif; letter-spacing: .22px; }
    .sw { width: 17px; height: 17px; border: 2px solid #e15759; border-radius: 2px; margin-top: -1px; }
    .bot { height: 37px; background: #e5e5e5; border-bottom: 1px solid #cfcfcf; display: flex; color: #555; letter-spacing: .15px; }
    .tab { display: flex; align-items: center; border-right: 1px solid #c6c6c6; padding: 2px 0 0 7.500px; gap: 4px; height: 36px; width: 71.250px; }
    .tab.ds { width: 164px; padding-left: 12px; gap: 6px; letter-spacing: .35px; } .tab.w75 { width: 75px; padding-left: 6.500px; letter-spacing: 0; } .tab.w79 { width: 78.500px; } .tab.big { width: 250px; padding-left: 9px; gap: 5px; letter-spacing: .46px; } .tab.s12 { width: 77.500px; } .tab.add { width: 40px; padding-left: 11px; }
    .tab.act { background: #fafafa; font-weight: 600; color: #444; letter-spacing: .35px; padding-top: 0; }
    .stat { height: 26px; background: #eaeaea; display: flex; align-items: center; color: #222; font-size: 14.500px; padding-left: 3px; letter-spacing: -.34px; }
    .stat .m { width: 86px; padding-top: 2px; }
    .stat .c { width: 1373px; padding-top: 2px; }
    .cell { height: 26px; border-left: 1px solid #c9c9c9; display: flex; align-items: center; }
    .w159 { width: 159px; border-left-width: 2px; } .w34 { width: 34px; } .w58 { width: 58px; } .w89 { width: 89px; border-left-width: 2px; padding-left: 9px; gap: 13px; } .w85 { width: 85px; padding-left: 11px; gap: 12px; }
    .bar { height: 50px; background: linear-gradient(90deg, #ecd8da, #e8d6d6 45%, #e2d4d4 80%, #e5d6d5); display: flex; align-items: center; font-family: "Open Sans", sans-serif; color: #111; }
    .start { width: 60px; display: flex; justify-content: center; }
    .find { width: 361px; height: 50px; background: #fff; border: 1px solid #cfc4c4; display: flex; align-items: center; padding-left: 14px; gap: 14px; font-size: 18px; letter-spacing: -.1px; color: #333; overflow: hidden; }
    .find .art { margin-left: auto; margin-top: 4px; }
    .app { width: 62px; height: 50px; display: flex; align-items: center; justify-content: center; }
    .app:nth-child(3) { padding-right: 2px; }
    .app.act { background: #f6efef; border-bottom: 3px solid #0078d7; width: 61px; margin-left: 1px; padding-right: 3px; }
    .tray { margin-left: auto; display: flex; align-items: center; height: 50px; }
    .wx { width: 231px; display: flex; align-items: center; gap: 9px; font-size: 17.500px; letter-spacing: -.15px; padding-left: 7px; }
    .wx b { font-weight: 400; margin-right: 1px; }
    .t { width: 30px; display: flex; justify-content: center; }
    .eng { width: 48px; font-size: 14.300px; letter-spacing: -.2px; padding-left: 7px; }
    .clock { width: 96px; text-align: center; font-size: 14.300px; line-height: 23px; letter-spacing: -.2px; margin: -1px 0 0 -6px; }
    .note { width: 59px; padding-left: 14px; }
    .peek { width: 6px; height: 50px; border-left: 1px solid #b9abab; }
  `;

  private row([k, n]: Field) {
    return html`<div class="row"><span class="k">${k}</span><span>${n}</span></div>`;
  }
  private hash(n: unknown) {
    return html`<div class="row"><span class="hash">${ic(14, 14, svg`<path d="M4.500 1v12M9.500 1v12M.5 4.500h13M.5 9.500h13" stroke="#3fa57c" stroke-width="1.200" />`)}</span>${n}</div>`;
  }
  private head(n: string, second = false) {
    return html`<div class="head ${second ? 'second' : ''}">${ic(10, 8, svg`<path d="M1 1.500l4 4 4-4" stroke="#777" stroke-width="1.500" />`)}
      ${ic(14, 14, svg`<rect x="1" y="1.500" width="12" height="11.500" rx="1" stroke="#777" stroke-width="1.300" /><path d="M1 3h12M1 6h12M1 9.500h12M5 4v9M9 4v9" stroke="#888" />`)}<span>${n}</span></div>`;
  }
  private btn(n: string, i: unknown) {
    return html`<div class="btn">${i}<span>${n}</span></div>`;
  }

  render() {
    const dark = caretIcon('#555'), pale = caretIcon('#bbb');
    const sep = html`<i class="sep"></i>`;
    return html`
      <div class="title">${snow(19)}<span>Tableau - DASHBOARD AND STORY - Tableau license expires in 7 days</span>
        <div class="win">
          ${ic(12, 12, svg`<path d="M0 5.500h12" stroke="#000" />`)}
          ${ic(12, 12, svg`<path d="M.5 2.500h9v9h-9zM2.500 2.500v-2h9v9h-2" stroke="#000" />`)}
          ${ic(12, 12, svg`<path d="M.5.5l11 11M11.500.5l-11 11" stroke="#000" />`)}
        </div>
      </div>
      <div class="menu">${['File', 'Data', 'Worksheet', 'Dashboard', 'Story', 'Analysis', 'Map', 'Format', 'Server', 'Window', 'Help'].map((m) => html`<span>${m}</span>`)}</div>
      <div class="tools">
        ${T.home}${sep}${T.back}${T.fwd}${T.replay}${dark}${T.save}${T.dbPlus}${T.dbPause}${dark}${T.refresh}${pale}${sep}
        ${T.newSheet}${dark}${T.dup}${T.clear}${dark}${sep}${T.swap}${T.sortA}${T.sortD}${sep}${T.pen}${dark}${T.clip}${pale}${T.text}
        <div class="on">${pinX(24)}</div><div class="fit">${pale}</div>${sep}${T.cards}${dark}${T.present}${sep}${T.share}<i></i>${T.guide}
        <div class="showme">${T.showMe}<span>Show Me</span></div>
      </div>
      <div class="main">
        <div class="side">
          <div class="tabs"><b>Data</b><div><span>Analytics</span>${ic(8, 13, svg`<path d="M7 1L1.500 6.500 7 12" stroke="#666" stroke-width="1.300" />`)}</div></div>
          <div class="src">${ic(17, 20, svg`<path d="M13 9V4c0-3.500-11-3.500-11 0v11c0 2 2 3 5 3M2 4c0 3.500 11 3.500 11 0" stroke="#888" stroke-width="1.300" /><circle cx="12" cy="14.500" r="4.500" fill="#3f86ab" /><path d="M10 14.500l1.500 1.500 2.500-3" stroke="#fff" />`)}<span>cheapestelectriccars-ev...</span></div>
          <div class="srch">
            <div class="box"><span>Search</span>${lens(14, '#666')}</div>
            ${ic(17, 16, svg`<path d="M1 1h15l-5.500 7v6.500h-4V8z" stroke="#666" stroke-width="1.300" />`)}<i></i>
            ${ic(17, 13, svg`<path d="M0 1.500h17M0 4.800h17M0 8.200h17M0 11.500h17" stroke="#666" stroke-width="1.600" stroke-dasharray="5 1" />`)}
            ${ic(9, 6, svg`<path d="M0 0h9L4.500 6z" fill="#555" />`)}
          </div>
          <div class="tbl">Tables</div>
          <div class="tree">
            <div class="list">
              ${this.head('cheapestelectriccars-...')}
              ${FIELDS1.map((f) => this.row(f))}
              <div class="rule"></div>
              ${this.hash(html`<span>Numberof Seats</span>`)}${this.hash(html`<em>cheapestelectriccar...</em>`)}
              ${this.head('Union', true)}
              ${FIELDS2.map((f) => this.row(f))}
            </div>
            <scroll-rail .thumb=${303}></scroll-rail>
          </div>
        </div>
        <div class="cards">
          <div class="card pages"><h4>Pages</h4></div>
          <div class="card filters"><h4>Filters</h4>
            <div class="pill fpill"><span>Exclusions (addre..</span>${ic(15, 15, svg`<circle cx="5.500" cy="5.500" r="4.300" stroke="#fff" /><circle cx="9.300" cy="9" r="4.300" stroke="#fff" />`)}</div>
          </div>
          <div class="card marks"><h4>Marks</h4>
            <div class="auto">${ic(13, 13, svg`<circle cx="6.500" cy="6.500" r="5.300" stroke="#777" stroke-width="1.300" />`)}<span>Automatic</span>${caretIcon('#555')}</div>
            <div class="btns">
              ${this.btn('Color', dots)}
              ${this.btn('Size', ic(20, 18, svg`<circle cx="12" cy="7.500" r="6.700" stroke="#777" stroke-width="1.400" /><circle cx="5.500" cy="13" r="4" fill="#fafafa" stroke="#777" stroke-width="1.400" />`))}
              ${this.btn('Label', ic(20, 18, svg`<rect x="1.500" y="1.500" width="17" height="14.500" rx="1" stroke="#777" stroke-width="1.400" /><path d="M7 6.500V5h6v1.500M10 5v8M8.500 13h3" stroke="#777" stroke-width="1.200" />`))}
              ${this.btn('Detail', ic(20, 18, svg`<circle cx="10" cy="5" r="3" fill="#666" /><circle cx="3" cy="12.500" r="2.300" stroke="#777" stroke-width="1.200" /><circle cx="10" cy="12.500" r="2.300" stroke="#777" stroke-width="1.200" /><circle cx="17" cy="12.500" r="2.300" stroke="#777" stroke-width="1.200" />`))}
              ${this.btn('Tooltip', ic(20, 18, svg`<path d="M2 2h16.500v10.500h-4V17l-4.500-4.500H2z" stroke="#777" stroke-width="1.400" stroke-linejoin="round" />`))}
            </div>
            <div class="mks">${['region', 'address', 'power'].map((n) => html`<div class="mk">${dots}<div class="pill">${n}</div></div>`)}</div>
          </div>
        </div>
        <div class="right">
          <div class="shelf c"><div class="lab">${ic(16, 16, svg`<path d="M3 1v2M8 1v2M13 1v2M3 4.500v11M8 4.500v11M13 4.500v11" stroke="#555" stroke-width="3" />`)}<span>Columns</span></div><div class="green">longitude</div></div>
          <div class="shelf"><div class="lab">${ic(16, 14, svg`<path d="M0 2h3M0 7h3M0 12h3M4.500 2h11M4.500 7h11M4.500 12h11" stroke="#555" stroke-width="2.400" />`)}<span>Rows</span></div><div class="green">latitude</div></div>
          <div class="work">
            <div class="sheet"><h1>EV CHARGING STATIONS MAP OF INDIA</h1><dark-map></dark-map></div>
            <div class="legend">
              <div class="lh">region, address, power</div>
              <div class="lb"><div>${LEGEND.map(([c, n]) => html`<div class="it"><i class="sw" style="background:${c}"></i>${n}</div>`)}</div><scroll-rail .thumb=${119}></scroll-rail></div>
            </div>
          </div>
        </div>
      </div>
      <div class="bot">
        <div class="tab ds">${db()}<span>Data Source</span></div>
        <div class="tab">Sheet 2</div><div class="tab act">Sheet 3</div>
        ${[4, 5, 6, 7, 8, 9].map((n) => html`<div class="tab">Sheet ${n}</div>`)}
        <div class="tab w79">Sheet 10</div><div class="tab w75">Sheet 11</div>
        <div class="tab big">${gridIc}<span>ELECTRIC VEHICLE ANALYT...</span></div>
        <div class="tab big">${bookIc}<span>STORY OF ELECTRIC VEHIC...</span></div>
        <div class="tab s12">Sheet 12</div>
        <div class="tab add">${ic(20, 22, svg`<path d="M10 14.500H1.500v-12.500h13V9M5 12V9M8 12V6M11 10V7.500" stroke="#777" stroke-width="1.300" /><path d="M14.500 12v8M10.500 16h8" stroke="#666" stroke-width="2.400" />`)}</div>
        <div class="tab add">${ic(20, 22, svg`<path d="M10 14.500H1.500v-12.500h13V9M8 2v12.500M1.500 8.300h13" stroke="#777" stroke-width="1.400" /><path d="M14.500 12v8M10.500 16h8" stroke="#666" stroke-width="2.400" />`)}</div>
        <div class="tab add">${ic(20, 22, svg`<path d="M10 15l-2.500-1.500H1.500V2l6.300 2L14 2v7M7.800 4v10" stroke="#777" stroke-width="1.400" /><path d="M14.500 12v8M10.500 16h8" stroke="#666" stroke-width="2.400" />`)}</div>
      </div>
      <div class="stat">
        <span class="m">167 marks</span><span class="c">1 row by 1 column</span>
        <div class="cell w159"></div><div class="cell w34"></div><div class="cell w34"></div><div class="cell w58"></div>
        <div class="cell w89">
          ${ic(8, 10, svg`<path d="M1 0v10" stroke="#bbb" stroke-width="1.500" /><path d="M7.500 0v10L2.500 5z" fill="#bbb" />`)}
          ${ic(6, 10, svg`<path d="M5.500 0v10L.5 5z" fill="#bbb" />`)}
          ${ic(6, 10, svg`<path d="M.5 0v10L5.500 5z" fill="#bbb" />`)}
          ${ic(8, 10, svg`<path d="M7 0v10" stroke="#bbb" stroke-width="1.500" /><path d="M.5 0v10L5.500 5z" fill="#bbb" />`)}
        </div>
        <div class="cell w85">
          ${ic(14, 14, svg`<path d="M0 2h14M0 7h14M0 12h14" stroke="#bbb" stroke-width="4" stroke-dasharray="4 1" />`)}
          ${ic(14, 14, svg`<path d="M0 4.500h14" stroke="#bbb" stroke-width="9" /><path d="M0 12h14" stroke="#bbb" stroke-width="4" stroke-dasharray="4 1" />`)}
          ${ic(14, 14, svg`<path d="M0 7h14" stroke="#666" stroke-width="14" />`)}
        </div>
      </div>
      <div class="bar">
        <div class="start">${ic(21, 21, svg`<path d="M0 3l8.500-1.200V10H0zM9.500 1.700L21 0v10H9.500zM0 11h8.500v8.200L0 18zM9.500 11H21v10l-11.500-1.700z" fill="#000" />`)}</div>
        <div class="find">${html`<svg width="21" height="21" viewBox="0 0 21 21" fill="none"><circle cx="13" cy="8" r="6.500" stroke="#222" stroke-width="1.500" /><path d="M8.300 12.700L1 20" stroke="#222" stroke-width="1.600" /></svg>`}<span>Type here to search</span>
          <div class="art">${ic(100, 46, svg`
            <defs><linearGradient id="soil" x1="0" y1="0" x2="0" y2="1"><stop offset="0" stop-color="#d8a558" /><stop offset="1" stop-color="#6b421c" /></linearGradient>
            <linearGradient id="pot" x1="0" y1="0" x2="1" y2="0"><stop offset="0" stop-color="#2e2323" /><stop offset=".4" stop-color="#7d6c6a" /><stop offset="1" stop-color="#2a2020" /></linearGradient>
            <linearGradient id="blade" x1="0" y1="0" x2="1" y2="1"><stop offset="0" stop-color="#e6eaf0" /><stop offset="1" stop-color="#5e6670" /></linearGradient></defs>
            <path d="M0 48c0-8 8-14 18-14 8 0 14 0 20-3 6-3 16-4 24 1 10 2 36-2 38 16z" fill="url(#soil)" />
            <ellipse cx="32" cy="39" rx="16" ry="3.500" fill="#4b2c12" opacity=".7" /><ellipse cx="74" cy="34" rx="13" ry="3" fill="#4b2c12" opacity=".6" />
            <path d="M9 26c-1-7 3-11 7-11 4 4 6 8 4 12-4 2-8 1-11-1zM49 26c2-6-1-11-5-11-4 4-5 8-3 11 3 2 6 1 8 0z" fill="#63b52d" />
            <path d="M20 23h24l-3 17c-3 3-14 3-17 0z" fill="url(#pot)" /><ellipse cx="32" cy="24" rx="12" ry="3" fill="#241a1a" />
            <ellipse cx="25" cy="6" rx="6.500" ry="6" fill="#f98fba" /><ellipse cx="36" cy="5" rx="7" ry="5.500" fill="#f77fae" /><ellipse cx="22" cy="13" rx="7" ry="5.500" fill="#f583b0" /><ellipse cx="40" cy="12" rx="7" ry="6" fill="#f06ba2" /><ellipse cx="30" cy="19" rx="7" ry="5.500" fill="#ee5f99" /><path d="M30 6l1.500 4 5 1-4 2 1 4-3.500-3-5 2 3-4-4-4 4.500 1z" fill="#d5386a" /><circle cx="31" cy="11.500" r="2" fill="#f6c95b" />
            <path d="M56 18l12 7c1 6-5 10-15 10-3-6-1-12 3-17z" fill="url(#blade)" /><path d="M58 30l13-12" stroke="#8d959e" stroke-width="2.200" />
            <path d="M73 16L82 5" stroke="#1c8fe3" stroke-width="8" stroke-linecap="round" /><path d="M71.500 14L80 4" stroke="#6cc6fb" stroke-width="2" stroke-linecap="round" />`)}</div>
        </div>
        <div class="app">${ic(22, 22, svg`<path d="M1 5.500V1M1 21v-4.500M14 5.500V1M14 21v-4.500M1 3.500h13M1 18.500h13M1 6.500h13v9H1z" stroke="#111" stroke-width="1.400" /><path d="M19 1v3.500M19 12v9" stroke="#111" stroke-width="1.400" /><path d="M17.500 6.500h3v4h-3z" fill="#111" />`)}</div>
        <div class="app">${ic(30, 30, svg`<defs><linearGradient id="eg" x1="0" y1="0" x2="1" y2=".4"><stop offset="0" stop-color="#2fa7de" /><stop offset=".6" stop-color="#37c6c0" /><stop offset="1" stop-color="#6fdc4f" /></linearGradient></defs>
          <path d="M15 0c9 0 15 6 15 12 0 6-5 8-9 8-3 0-4-1-4-2s1.500-2 1.500-4c0-3-3-6-7.500-6C5 8 1 12 0 15 0 6 7 0 15 0z" fill="url(#eg)" />
          <path d="M0 15c1-5 5-8 10-8 6 0 9 3.500 9 6.500-3-2-9-1-9 5 0 5 5 8.500 10 8.500 3 0 5.500-1 7.500-2.500C25 28 20 30 15 30 6 30 0 23 0 15z" fill="#1269b8" /><path d="M10 18.500c0 5 5 8.500 10 8.500-9 4-17-2-16-10 .5-3 3-6 7-6-1 2-1 5-1 7.500z" fill="#0f509a" />`)}</div>
        <div class="app">${ic(28, 24, svg`<path d="M0 2c0-1 .5-2 2-2h8l2.500 3H26c1 0 2 .8 2 2v17c0 1-1 2-2 2H2c-1 0-2-1-2-2z" fill="#f8c63f" /><path d="M0 2c0-1 .5-2 2-2h8l2.500 3-1.500 2H0z" fill="#d89b10" /><path d="M0 6h28v10H0z" fill="#fbd566" /><path d="M6 23v-7c0-1 1-2 2-2h12c1 0 2 1 2 2v7h-4.500v-4h-7v4z" fill="#3d94dc" />`)}</div>
        <div class="app">${ic(31, 28, svg`<path d="M0 11L15.500 0 31 11v17H0z" fill="#0d62b5" /><path d="M2 10h27v10H2z" fill="#f4f6f8" /><path d="M0 11l15.500 9L31 11v17H0z" fill="#1f9ae6" /><path d="M31 11L10 24l5 4h16z" fill="#43c2f5" />`)}</div>
        <div class="app act">${snow(28)}</div>
        <div class="tray">
          <div class="wx">${ic(31, 30, svg`<defs><linearGradient id="cl" x1="0" y1="0" x2="0" y2="1"><stop offset="0" stop-color="#8fb0ec" /><stop offset=".6" stop-color="#cfe0fa" /><stop offset="1" stop-color="#7fa6ea" /></linearGradient></defs><path d="M12 0c6 5 6 14-2 17-4 2-8-1-9-5 7 0 12-5 11-12z" fill="#f2a01f" /><path d="M7 29.500c-8 0-9-10 0-11 1-10 14-11 16-2 10-1 10 13 1 13z" fill="url(#cl)" />`)}<b>30°C</b><span>Mostly cloudy</span></div>
          <div class="t">${ic(16, 10, svg`<path d="M1 9l7-7.500L15 9" stroke="#111" stroke-width="1.400" />`)}</div>
          <div class="t">${ic(15, 19, svg`<path d="M2 5.500h8v9H2zM10 9l3.500-2v6L10 11.500M3 2.500c2-2 5-2 7 0M3 17c2 1.500 5 1.500 7 0" stroke="#111" stroke-width="1.200" />`)}</div>
          <div class="t">${ic(21, 21, svg`<path d="M13 18.500L1 17V3.500L20.500 1v9" stroke="#111" stroke-width="1.300" /><path d="M6 9c1-3.500 6-3.500 7 0M14 6v3h-3M14 11.500c-1 3-6 3-7 0M6 14.500v-3h3" stroke="#111" stroke-width="1.200" /><circle cx="16" cy="16" r="4.800" fill="#ff9500" />`)}</div>
          <div class="t">${ic(17, 18, svg`<path d="M1 17C1 8 8 2 16 1M4.500 17C5 10 10 6 16 5M8 17c.5-5 4-8 8-8M11.500 17c0-2.500 2-4 4.500-4" stroke="#333" stroke-width="1.300" /><circle cx="14.500" cy="16" r="1.300" fill="#111" />`)}</div>
          <div class="t">${ic(21, 18, svg`<path d="M1 6.500h3l4-4v13l-4-4H1zM11 6.500c1 1.500 1 3.500 0 5M14 4c2.500 3 2.500 7 0 10M17 1.500c4 4.500 4 10.500 0 15" stroke="#222" stroke-width="1.200" />`)}</div>
          <div class="eng">ENG</div>
          <div class="clock">08:24<br />14-04-2023</div>
          <div class="note">${ic(32, 36, svg`<path d="M0 5h20v15H8v4l-4-4H0z" fill="#000" /><path d="M4 9h12M4 12.500h12M4 16h12" stroke="#ddd" stroke-width="1.300" /><circle cx="20" cy="26.500" r="9.300" fill="#d8cfcf" stroke="#777" /><text x="20" y="31.500" font-family="Open Sans, sans-serif" font-size="13" text-anchor="middle" fill="#111">8</text>`)}</div>
          <div class="peek"></div>
        </div>
      </div>`;
  }
}
